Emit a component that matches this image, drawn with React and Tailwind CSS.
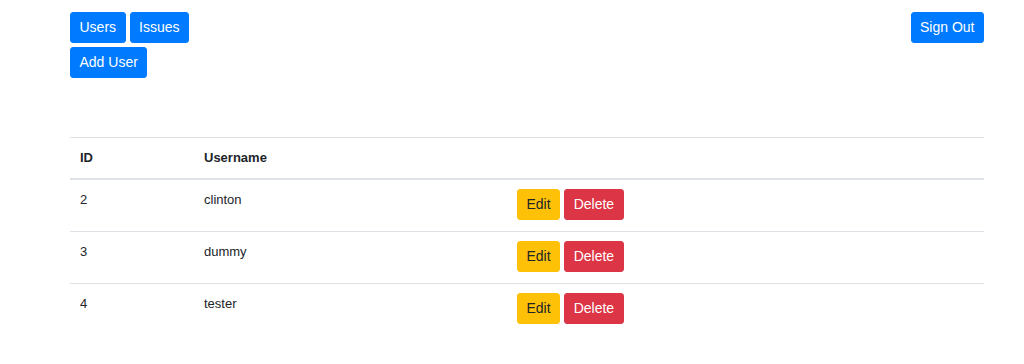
import React from "react";

const users = [
  { id: 2, username: "clinton" },
  { id: 3, username: "dummy" },
  { id: 4, username: "tester" },
];

const btn = "inline-block h-[31px] px-[8.5px] text-[14px] leading-[21px] rounded-[3px] border";

export default function App() {
  return (
    <div className="min-h-screen bg-white text-[#212529] text-[13px]" style={{ fontFamily: "'Liberation Sans', Arial, sans-serif" }}>
      <div className="pl-[70px] pr-[40px] pt-[12px]">
        <div className="flex items-start justify-between">
          <div className="flex flex-col gap-[4px]">
            <div className="flex gap-[4px]">
              <button className={`${btn} bg-[#007bff] border-[#007bff] text-white`}>Users</button>
              <button className={`${btn} bg-[#007bff] border-[#007bff] text-white`}>Issues</button>
            </div>
            <div>
              <button className={`${btn} bg-[#007bff] border-[#007bff] text-white`}>Add User</button>
            </div>
          </div>
          <button className={`${btn} bg-[#007bff] border-[#007bff] text-white`}>Sign Out</button>
        </div>

        <div className="mt-[59px] border-t border-[#dee2e6]">
          <div className="grid grid-cols-[124px_313px_1fr] border-b-2 border-[#dee2e6] font-bold">
            <div className="px-[10px] py-[10px] leading-[20px]">ID</div>
            <div className="px-[10px] py-[10px] leading-[20px]">Username</div>
            <div />
          </div>
          <div className="divide-y divide-[#dee2e6]">
            {users.map((u) => (
              <div key={u.id} className="grid grid-cols-[124px_313px_1fr]">
                <div className="px-[10px] py-[10px] leading-[20px]">{u.id}</div>
                <div className="px-[10px] py-[10px] leading-[20px]">{u.username}</div>
                <div className="px-[10px] py-[9px] pb-[11px] flex gap-[4px]">
                  <button className={`${btn} bg-[#ffc107] border-[#ffc107] text-[#212529]`}>Edit</button>
                  <button className={`${btn} bg-[#dc3545] border-[#dc3545] text-white`}>Delete</button>
                </div>
              </div>
            ))}
          </div>
        </div>
      </div>
    </div>
  );
}
